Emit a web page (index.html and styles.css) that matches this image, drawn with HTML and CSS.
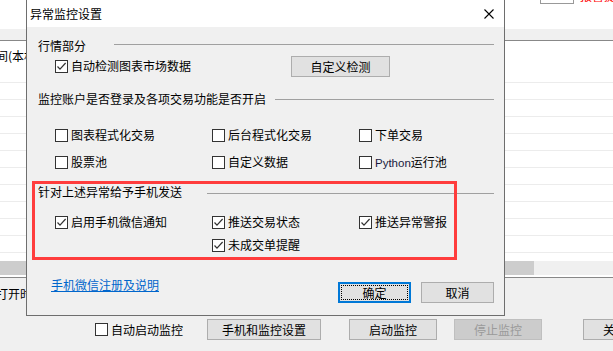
FILE: index.html
```html
<!DOCTYPE html>
<html lang="zh-CN">
<head>
<meta charset="utf-8">
<title>异常监控设置</title>
<link rel="stylesheet" href="styles.css">
</head>
<body>
<div class="app">
  <div class="app-top">
    <span class="tab-box"></span>
    <span class="red-text"><span>报警提示</span></span>
  </div>
  <div class="app-head"></div>
  <div class="table">
    <div class="row row-first"><span class="cell-text"><span>间(本机交易</span></span></div>
    <div class="row"></div>
    <div class="row"></div>
    <div class="row"></div>
    <div class="row"></div>
    <div class="row"></div>
    <div class="row"></div>
    <div class="row"></div>
    <div class="row"></div>
    <div class="row"></div>
    <div class="row"></div>
    <div class="table-tail"></div>
  </div>
  <div class="hscroll"><div class="thumb"></div></div>
  <div class="panel">
    <div class="panel-text"><span>打开时自动启动监控</span></div>
    <div class="panel-actions">
      <span class="check check-auto"><span class="box"></span><span>自动启动监控</span></span>
      <button class="btn btn-settings">手机和监控设置</button>
      <button class="btn btn-start">启动监控</button>
      <button class="btn btn-stop" disabled>停止监控</button>
      <button class="btn btn-close">关闭窗口</button>
    </div>
  </div>
</div>

<div class="dialog">
  <div class="dlg-title">
    <span>异常监控设置</span>
    <svg class="close-x" width="10" height="10" viewBox="0 0 10 10"><path d="M0.5 0.5 L9.5 9.5 M9.5 0.5 L0.5 9.5" stroke="#000" stroke-width="1.1" fill="none"/></svg>
  </div>
  <div class="dlg-body">
    <div class="group-head"><span class="head-label label-1">行情部分</span><i class="rule"></i></div>
    <div class="market-row">
      <span class="check"><span class="box"><svg width="11" height="11" viewBox="0 0 11 11"><polyline points="1.5,5.5 4,8.2 9.6,2" stroke="#333" stroke-width="1.2" fill="none"/></svg></span><span>自动检测图表市场数据</span></span>
      <button class="btn btn-detect">自定义检测</button>
    </div>

    <div class="group-head head-2"><span class="head-label label-2">监控账户是否登录及各项交易功能是否开启</span><i class="rule"></i></div>
    <div class="check-grid">
      <span class="check"><span class="box"></span><span>图表程式化交易</span></span>
      <span class="check"><span class="box"></span><span>后台程式化交易</span></span>
      <span class="check"><span class="box"></span><span>下单交易</span></span>
      <span class="check"><span class="box"></span><span>股票池</span></span>
      <span class="check"><span class="box"></span><span>自定义数据</span></span>
      <span class="check"><span class="box"></span><span><span class="latin">Python</span>运行池</span></span>
    </div>

    <div class="group-head head-3"><span class="head-label label-3">针对上述异常给予手机发送</span><i class="rule"></i></div>
    <div class="check-grid grid-phone">
      <span class="check"><span class="box"><svg width="11" height="11" viewBox="0 0 11 11"><polyline points="1.5,5.5 4,8.2 9.6,2" stroke="#333" stroke-width="1.2" fill="none"/></svg></span><span>启用手机微信通知</span></span>
      <span class="check"><span class="box"><svg width="11" height="11" viewBox="0 0 11 11"><polyline points="1.5,5.5 4,8.2 9.6,2" stroke="#333" stroke-width="1.2" fill="none"/></svg></span><span>推送交易状态</span></span>
      <span class="check"><span class="box"><svg width="11" height="11" viewBox="0 0 11 11"><polyline points="1.5,5.5 4,8.2 9.6,2" stroke="#333" stroke-width="1.2" fill="none"/></svg></span><span>推送异常警报</span></span>
      <span class="empty-cell"></span>
      <span class="check"><span class="box"><svg width="11" height="11" viewBox="0 0 11 11"><polyline points="1.5,5.5 4,8.2 9.6,2" stroke="#333" stroke-width="1.2" fill="none"/></svg></span><span>未成交单提醒</span></span>
    </div>

    <div class="dlg-footer">
      <a class="link" href="#">手机微信注册及说明</a>
      <div class="footer-btns">
        <button class="btn btn-ok">确定</button>
        <button class="btn btn-cancel">取消</button>
      </div>
    </div>
  </div>
  <div class="highlight"></div>
</div>
</body>
</html>
```
FILE: styles.css
```css
* { box-sizing: border-box; }

body {
  margin: 0;
  width: 613px;
  height: 351px;
  overflow: hidden;
  position: relative;
  background: #f0f0f0;
  color: #000;
  font-family: "Noto Sans CJK SC", "Microsoft YaHei", sans-serif;
  font-size: 12px;
  line-height: 14px;
}

/* ---------- background window ---------- */
.app-top {
  height: 29px;
  background: #fff;
  display: flex;
  justify-content: flex-end;
  align-items: flex-start;
}
.tab-box {
  width: 34px;
  height: 4px;
  border: 1px solid #999;
  border-top: 0;
}
.red-text {
  display: block;
  width: 33px;
  height: 4px;
  margin-left: 6px;
  overflow: hidden;
  color: #f00;
  white-space: nowrap;
}
.red-text span { display: block; margin-top: -11px; }

.app-head {
  height: 12px;
  background: #f0f0f0;
  border-bottom: 1px solid #888;
}

.table { background: #fff; }
.row {
  height: 17px;
  border-bottom: 1px solid #ececec;
}
.row-first {
  height: 42px;
  padding-top: 8px;
}
.cell-text,
.panel-text {
  display: block;
  width: 26px;
  overflow: hidden;
  white-space: nowrap;
}
.cell-text span,
.panel-text span {
  display: block;
  margin-left: -4px;
}
.table-tail { height: 8px; }

.hscroll {
  height: 16px;
  background: #f0f0f0;
  border-bottom: 2px solid #fff;
  display: flex;
}
.thumb {
  width: 534px;
  background: #cdcdcd;
}

.panel {
  border-top: 1px solid #888;
  height: 74px;
}
.panel-text { margin-top: 9px; }
.panel-actions {
  display: flex;
  align-items: center;
  margin-top: 18px;
}
.check-auto { margin-left: 95px; }

/* ---------- shared controls ---------- */
.check {
  display: inline-flex;
  align-items: center;
  gap: 3px;
  height: 14px;
  white-space: nowrap;
}
.box {
  width: 13px;
  height: 13px;
  flex: none;
  background: #fff;
  border: 1px solid #333;
  display: flex;
  align-items: center;
  justify-content: center;
}
.box svg { display: block; }
.latin {
  font-family: "Liberation Sans", "Noto Sans", sans-serif;
  font-size: 11.5px;
  color: #1a1a40;
}

.btn {
  height: 21px;
  padding: 0;
  border: 1px solid #adadad;
  background: #e1e1e1;
  color: #000;
  font: inherit;
  display: flex;
  align-items: center;
  justify-content: center;
  flex: none;
}
.btn-settings { width: 114px; margin-left: 24px; }
.btn-start { width: 88px; margin-left: 28px; }
.btn-stop {
  width: 88px;
  margin-left: 17px;
  background: #cccccc;
  border-color: #bfbfbf;
  color: #9a9a9a;
}
.btn-close { width: 88px; margin-left: 41px; }

/* ---------- dialog ---------- */
.dialog {
  position: absolute;
  left: 26px;
  top: -1px;
  width: 479px;
  height: 317px;
  border: 1px solid #6e6e6e;
  background: #f0f0f0;
}
.dlg-title {
  height: 27px;
  background: #fff;
  display: flex;
  align-items: center;
  justify-content: space-between;
  padding: 1px 10px 0 3px;
}
.close-x { display: block; }

.dlg-body {
  padding: 12px 10px 0 11px;
}
.group-head {
  display: flex;
  align-items: flex-start;
  height: 14px;
}
.head-label { flex: none; white-space: nowrap; }
.label-1 { width: 76px; }
.label-2 { width: 237px; }
.label-3 { width: 169px; }
.rule {
  flex: 1;
  height: 1px;
  margin-top: 5px;
  background: #a0a0a0;
}
.head-2 { margin-top: 15px; }
.head-2 .rule { margin-top: 7px; }
.head-3 { margin-top: 16px; }
.head-3 .rule { margin-top: 8px; }

.market-row {
  margin-top: 3px;
  display: grid;
  grid-template-columns: 253px 99px;
  align-items: center;
  height: 21px;
  padding-left: 17px;
}
.market-row .check { margin-top: -1px; }
.market-row .btn { grid-column: 2; width: 99px; margin-left: -17px; }

.check-grid {
  margin-top: 22px;
  padding-left: 17px;
  display: grid;
  grid-template-columns: 157px 147px auto;
  grid-auto-rows: 14px;
  row-gap: 13px;
}
.grid-phone {
  margin-top: 16px;
  row-gap: 9px;
}

.dlg-footer {
  margin-top: 26px;
  display: flex;
  align-items: flex-start;
}
.link {
  margin-left: 13px;
  color: #0066cc;
  text-decoration: underline;
  white-space: nowrap;
}
.footer-btns {
  margin-left: auto;
  margin-top: 4px;
  display: flex;
  gap: 10px;
}
.btn-ok, .btn-cancel { width: 73px; }
.btn-ok {
  border: 2px solid #0078d7;
  outline: 1px dotted #000;
  outline-offset: -4px;
}

.highlight {
  position: absolute;
  left: 5px;
  top: 181px;
  width: 425px;
  height: 79px;
  border: 3px solid #ff3d3d;
}
```
